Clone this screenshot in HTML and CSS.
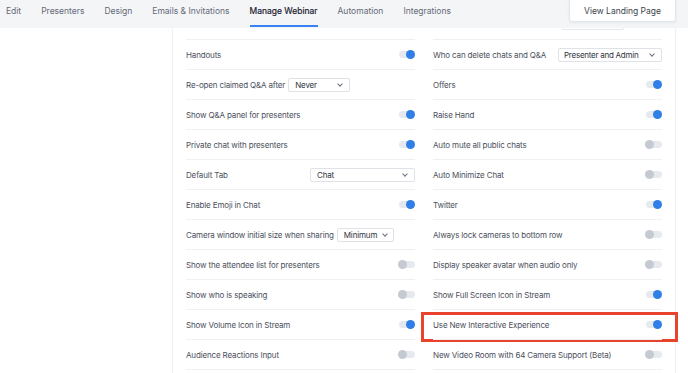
FILE: index.html
```html
<!DOCTYPE html>
<html lang="en">
<head>
    <meta charset="UTF-8">
    <meta name="viewport" content="width=device-width, initial-scale=1.0">
    <title>Manage Webinar</title>
    <link rel="stylesheet" href="styles.css">
</head>
<body>
    <div class="topbar">
        <div class="tabs">
            <div class="tab">Edit</div>
            <div class="tab">Presenters</div>
            <div class="tab">Design</div>
            <div class="tab">Emails &amp; Invitations</div>
            <div class="tab active">Manage Webinar</div>
            <div class="tab">Automation</div>
            <div class="tab">Integrations</div>
        </div>
        <button class="landing-btn">View Landing Page</button>
    </div>

    <div class="main">
        <div class="sidebar"></div>

        <div class="panel">
            <div class="peek"><span class="peek-select"></span></div>

            <div class="grid">
                <div class="col">
                    <div class="row">
                        <span class="label">Handouts</span>
                        <span class="toggle on"></span>
                    </div>
                    <div class="row">
                        <span class="label">Re-open claimed Q&amp;A after</span>
                        <span class="select w-never">Never <i class="chev"></i></span>
                    </div>
                    <div class="row">
                        <span class="label">Show Q&amp;A panel for presenters</span>
                        <span class="toggle on"></span>
                    </div>
                    <div class="row">
                        <span class="label">Private chat with presenters</span>
                        <span class="toggle on"></span>
                    </div>
                    <div class="row">
                        <span class="label">Default Tab</span>
                        <span class="select push w-chat">Chat <i class="chev"></i></span>
                    </div>
                    <div class="row">
                        <span class="label">Enable Emoji in Chat</span>
                        <span class="toggle on"></span>
                    </div>
                    <div class="row">
                        <span class="label">Camera window initial size when sharing</span>
                        <span class="select w-min">Minimum <i class="chev"></i></span>
                    </div>
                    <div class="row">
                        <span class="label">Show the attendee list for presenters</span>
                        <span class="toggle"></span>
                    </div>
                    <div class="row">
                        <span class="label">Show who is speaking</span>
                        <span class="toggle"></span>
                    </div>
                    <div class="row">
                        <span class="label">Show Volume Icon in Stream</span>
                        <span class="toggle on"></span>
                    </div>
                    <div class="row">
                        <span class="label">Audience Reactions Input</span>
                        <span class="toggle"></span>
                    </div>
                </div>

                <div class="col">
                    <div class="row">
                        <span class="label">Who can delete chats and Q&amp;A</span>
                        <span class="select push w-admin">Presenter and Admin <i class="chev"></i></span>
                    </div>
                    <div class="row">
                        <span class="label">Offers</span>
                        <span class="toggle on"></span>
                    </div>
                    <div class="row">
                        <span class="label">Raise Hand</span>
                        <span class="toggle on"></span>
                    </div>
                    <div class="row">
                        <span class="label">Auto mute all public chats</span>
                        <span class="toggle"></span>
                    </div>
                    <div class="row">
                        <span class="label">Auto Minimize Chat</span>
                        <span class="toggle"></span>
                    </div>
                    <div class="row">
                        <span class="label">Twitter</span>
                        <span class="toggle on"></span>
                    </div>
                    <div class="row">
                        <span class="label">Always lock cameras to bottom row</span>
                        <span class="toggle"></span>
                    </div>
                    <div class="row">
                        <span class="label">Display speaker avatar when audio only</span>
                        <span class="toggle"></span>
                    </div>
                    <div class="row">
                        <span class="label">Show Full Screen Icon in Stream</span>
                        <span class="toggle on"></span>
                    </div>
                    <div class="row">
                        <span class="label">Use New Interactive Experience</span>
                        <span class="toggle on"></span>
                        <span class="highlight"></span>
                    </div>
                    <div class="row">
                        <span class="label">New Video Room with 64 Camera Support (Beta)</span>
                        <span class="toggle"></span>
                    </div>
                </div>
            </div>
        </div>
    </div>
</body>
</html>
```

FILE: styles.css
```css
body {
    font-family: Inter, "Liberation Sans", sans-serif;
    margin: 0;
    padding: 0;
    background-color: #ffffff;
    color: #4b505c;
    width: 688px;
    height: 373px;
    overflow: hidden;
}

.topbar {
    display: flex;
    height: 28px;
    background-color: #f4f5f7;
}

.tabs {
    display: flex;
    gap: 20px;
    padding-left: 6px;
}

.tab {
    height: 27px;
    padding-top: 5px;
    box-sizing: border-box;
    font-size: 8.5px;
    line-height: 12px;
    color: #646a78;
}

.tab.active {
    color: #1c2130;
    border-bottom: 2px solid #3b82f6;
    -webkit-text-stroke: 0.2px #1c2130;
}

.landing-btn {
    margin-left: auto;
    margin-right: 12px;
    width: 107px;
    height: 23px;
    margin-top: -1px;
    background: #ffffff;
    border: 1px solid #e3e6ea;
    border-radius: 0 0 3px 3px;
    box-shadow: 0 1px 3px rgba(0,0,0,0.06);
    font-family: inherit;
    font-size: 8.5px;
    color: #3a3f4c;
    padding: 0;
}

.main {
    display: flex;
    height: 345px;
}

.sidebar {
    width: 172px;
    border-right: 1px solid #eef0f3;
}

.panel {
    width: 503px;
    padding: 0 14px 0 13px;
    box-sizing: border-box;
    border-right: 1px solid #eef0f3;
}

.peek {
    height: 11px;
}

.peek-select {
    display: block;
    margin-left: 376px;
    width: 60px;
    height: 1px;
    border: 1px solid #e3e6ea;
    border-top: none;
    border-radius: 0 0 3px 3px;
}

.grid {
    display: grid;
    grid-template-columns: 229px 229px;
    gap: 18px;
}

.row {
    position: relative;
    display: flex;
    align-items: center;
    height: 30px;
    box-sizing: border-box;
    border-top: 1px solid #eef0f3;
    font-size: 8px;
    letter-spacing: -0.15px;
}

.row:last-child {
    border-bottom: 1px solid #eef0f3;
    height: 31px;
}

.label {
    white-space: nowrap;
}

.toggle {
    position: relative;
    margin-left: auto;
    width: 16px;
    height: 7px;
    border-radius: 4px;
    background-color: #e6e9ee;
}

.toggle::after {
    content: "";
    position: absolute;
    left: -1px;
    top: -1px;
    width: 9px;
    height: 9px;
    border-radius: 50%;
    background-color: #c5c9d1;
}

.toggle.on::after {
    left: auto;
    right: 0;
    background-color: #2f7fe6;
}

.select {
    display: flex;
    align-items: center;
    justify-content: space-between;
    height: 14px;
    box-sizing: border-box;
    margin-left: 3px;
    padding: 0 7px 0 6px;
    border: 1px solid #dfe2e7;
    border-radius: 2px;
    background: #ffffff;
    color: #2f3440;
    white-space: nowrap;
}

.select.push {
    margin-left: auto;
}

.w-never { width: 62px; }
.w-chat { width: 105px; }
.w-min { width: 57px; padding-right: 6px; }
.w-admin { width: 104px; padding-left: 5px; letter-spacing: -0.25px; }

.chev {
    width: 3px;
    height: 3px;
    border-right: 1px solid #6b7180;
    border-bottom: 1px solid #6b7180;
    transform: rotate(45deg);
    margin-top: -2px;
    margin-left: 4px;
}

.highlight {
    position: absolute;
    left: -12px;
    right: -16px;
    top: 2px;
    bottom: -3px;
    border: 3px solid #e8432d;
}
```
